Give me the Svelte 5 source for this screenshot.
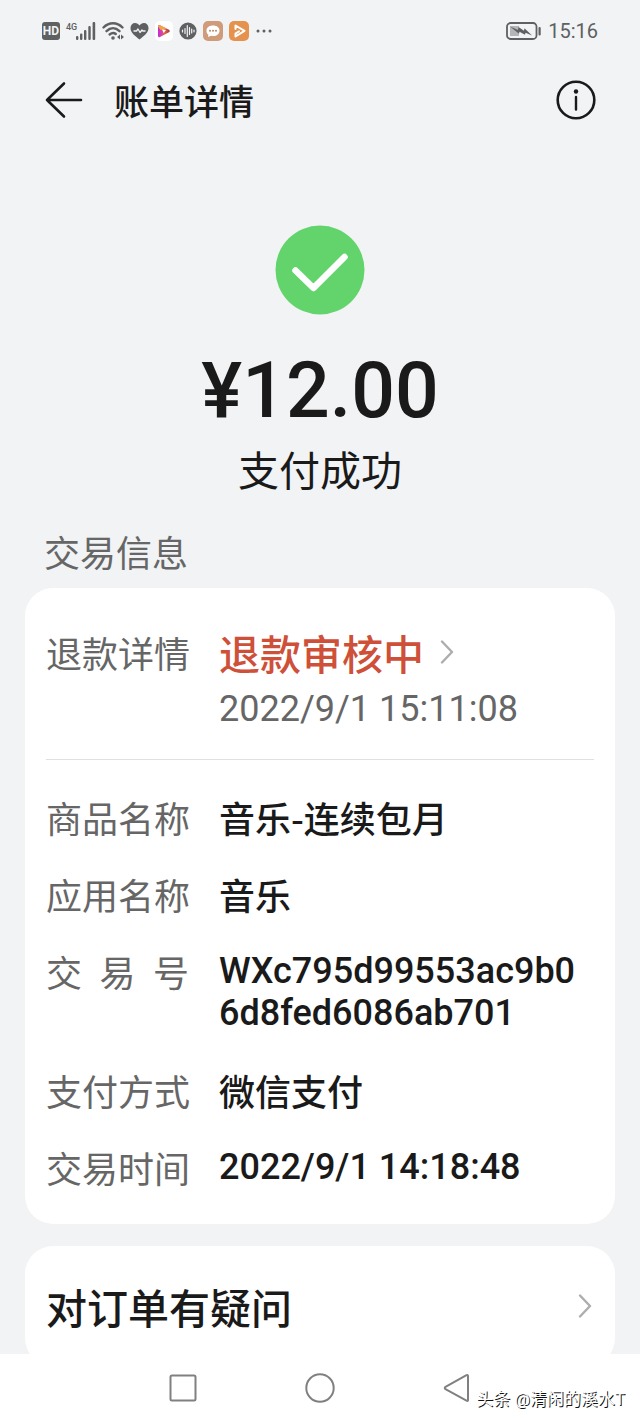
<script>
  const refund = {
    status: '退款审核中',
    time: '2022/9/1 15:11:08'
  };

  const details = [
    { label: '商品名称', value: '音乐-连续包月', cjk: true },
    { label: '应用名称', value: '音乐', cjk: true },
    { label: '交易号', value: 'WXc795d99553ac9b06d8fed6086ab701', spread: true },
    { label: '支付方式', value: '微信支付', cjk: true },
    { label: '交易时间', value: '2022/9/1 14:18:48' }
  ];
</script>

{#snippet chevron()}
  <svg class="chevron" viewBox="0 0 14 24" aria-hidden="true">
    <path d="M2 1.500l10 10.500L2 22.500" fill="none" stroke="#adadad" stroke-width="2.400" stroke-linecap="round" stroke-linejoin="round" />
  </svg>
{/snippet}

<div class="screen">
  <div class="status-bar">
    <div class="status-icons">
      <span class="hd">HD</span>

      <span class="signal">
        <span class="signal-type">4G</span>
        <svg width="20" height="18" viewBox="0 0 20 18" fill="#5e6062">
          <rect x="0" y="14" width="2.400" height="4" rx="1" />
          <rect x="4" y="11.500" width="2.400" height="6.500" rx="1" />
          <rect x="8" y="8" width="2.400" height="10" rx="1" />
          <rect x="12.300" y="4" width="2.400" height="14" rx="1" />
          <rect x="16.600" y="0" width="2.600" height="18" rx="1" />
        </svg>
      </span>

      <svg width="22" height="18" viewBox="0 0 22 18" fill="none" stroke="#5e6062" stroke-linecap="round">
        <path d="M1.500 5.500C7-.2 15-.2 20.500 5.500" stroke-width="2.400" />
        <path d="M4.500 9.200C8.500 5.200 13.500 5.200 17.500 9.200" stroke-width="2.400" />
        <path d="M7.600 12.500C9.800 10.600 12.200 10.600 13.800 12" stroke-width="2.400" />
        <circle cx="11" cy="16" r="1.800" fill="#5e6062" stroke="none" />
        <path d="M18 12.500L15 15l3 2.500zM19 12.500L22 15l-3 2.500z" fill="#5e6062" stroke="none" />
      </svg>

      <svg width="19" height="18" viewBox="0 0 19 18">
        <path d="M9.500 17.500C5 14 .5 10.500.5 6 .5 3 2.500 1 5 1c2 0 3.500 1 4.500 2.600C10.500 2 12 1 14 1c2.500 0 4.500 2 4.500 5 0 4.500-4.500 8-9 11.500z" fill="#5e6062" />
        <path d="M3.500 9h3l1.500-2 2 3.500 2-2.500 1 1h2.500" fill="none" stroke="#f1f3f5" stroke-width="1.300" stroke-linejoin="round" />
      </svg>

      <svg width="18" height="20" viewBox="0 0 18 20">
        <defs>
          <linearGradient id="video-fill" x1="0" y1="0" x2="1" y2="0">
            <stop offset="0" stop-color="#c32ad8" />
            <stop offset="0.350" stop-color="#d8489c" />
            <stop offset="0.550" stop-color="#e0703e" />
            <stop offset="1" stop-color="#a52a4c" />
          </linearGradient>
        </defs>
        <rect width="18" height="20" rx="5" fill="#fff" />
        <path d="M3 5.500q0-2 2-1.200l9 4.500q1.800 1.200 0 2.500L5 16q-2 .8-2-1.200z" fill="url(#video-fill)" />
        <path d="M3 5.500q0-2 2-1.200l6.500 3.300-6 1.500z" fill="#f2a53a" />
        <path d="M7 8.300l4 .6-2.400 3z" fill="#fff" />
      </svg>

      <svg width="18" height="18" viewBox="0 0 18 18">
        <circle cx="9" cy="9" r="8.600" fill="#5e6062" />
        <path d="M3.500 8v2M6 6.500v5M8.300 3.500v11M10.500 5.500v7M12.700 7v4M15 8.200v1.600" stroke="#f1f3f5" stroke-width="1.200" stroke-linecap="round" />
      </svg>

      <svg width="20" height="20" viewBox="0 0 20 20">
        <rect width="20" height="20" rx="5" fill="#cf9c7b" />
        <path d="M10 4.500c4 0 6.500 2.200 6.500 5.200S14 15 10 15c-.7 0-1.400 0-2-.2L5 16l.4-2.200C4 12.800 3.500 11.300 3.500 9.700c0-3 2.500-5.200 6.500-5.200z" fill="#fff" />
        <g fill="#b98768">
          <circle cx="7" cy="9.800" r="1" />
          <circle cx="10" cy="9.800" r="1" />
          <circle cx="13" cy="9.800" r="1" />
        </g>
      </svg>

      <svg width="20" height="20" viewBox="0 0 20 20">
        <rect width="20" height="20" rx="5" fill="#e5924f" />
        <path d="M6.500 8V4.500l9 5.300-9 5.700v-3l3.500-2.200" fill="none" stroke="#fff" stroke-width="2" stroke-linecap="round" stroke-linejoin="round" />
      </svg>

      <svg width="18" height="4" viewBox="0 0 18 4" fill="#5e6062">
        <circle cx="3" cy="2" r="1.500" />
        <circle cx="9" cy="2" r="1.500" />
        <circle cx="15" cy="2" r="1.500" />
      </svg>
    </div>

    <div class="status-right">
      <svg width="36" height="20" viewBox="0 0 36 20">
        <rect x="1" y="2" width="29.500" height="16" rx="3.500" fill="none" stroke="#5e6062" stroke-width="1.800" />
        <rect x="4" y="5" width="9" height="10" fill="#b5b6b8" />
        <path d="M4 5.500l8 3.500.5-3 5.500 3.800.5-2.600 7.500 7.300-6.500-2.700-.5 2-5.500-3-.5 2z" fill="#5e6062" />
        <rect x="32.500" y="6" width="2.200" height="8.500" rx="1" fill="#5e6062" />
      </svg>
      <time>15:16</time>
    </div>
  </div>

  <header class="header">
    <button class="icon-button" aria-label="返回">
      <svg width="40" height="40" viewBox="0 0 40 40" fill="none" stroke="#1a1a1a" stroke-width="2.600" stroke-linecap="round" stroke-linejoin="round">
        <path d="M20 3.500L3 20l17 16.500M3 20h34" />
      </svg>
    </button>
    <h1>账单详情</h1>
    <button class="icon-button" aria-label="帮助">
      <svg width="40" height="40" viewBox="0 0 40 40">
        <circle cx="20" cy="20" r="18.300" fill="none" stroke="#1a1a1a" stroke-width="2.600" />
        <circle cx="20" cy="11.500" r="2.200" fill="#1a1a1a" />
        <path d="M20 17v12.500" stroke="#1a1a1a" stroke-width="2.400" stroke-linecap="round" />
      </svg>
    </button>
  </header>

  <main>
    <section class="result">
      <svg width="90" height="90" viewBox="0 0 90 90">
        <circle cx="45" cy="45" r="44.500" fill="#62d46b" />
        <path d="M20.500 45.500L38.500 63 69.500 32" fill="none" stroke="#fff" stroke-width="6.500" stroke-linecap="round" stroke-linejoin="round" />
      </svg>
      <p class="amount">¥12.00</p>
      <p class="result-text">支付成功</p>
    </section>

    <h2>交易信息</h2>

    <section class="card">
      <div class="refund">
        <span class="label refund-label">退款详情</span>
        <div>
          <button class="refund-status">
            {refund.status}
            {@render chevron()}
          </button>
          <p class="refund-time">{refund.time}</p>
        </div>
      </div>

      <dl class="details">
        {#each details as item}
          <div class="row">
            <dt class="label" class:spread={item.spread}>
              {#if item.spread}
                {#each item.label as char}<span>{char}</span>{/each}
              {:else}
                {item.label}
              {/if}
            </dt>
            <dd class:cjk={item.cjk}>{item.value}</dd>
          </div>
        {/each}
      </dl>
    </section>

    <button class="card question">
      对订单有疑问
      {@render chevron()}
    </button>
  </main>

  <nav class="nav-bar">
    <button aria-label="最近任务">
      <svg width="30" height="30" viewBox="0 0 30 30">
        <rect x="2.500" y="2.500" width="25" height="25" rx="1.500" fill="none" stroke="#808080" stroke-width="2" />
      </svg>
    </button>
    <button aria-label="主屏幕">
      <svg width="30" height="30" viewBox="0 0 30 30">
        <circle cx="15" cy="15" r="13.700" fill="none" stroke="#808080" stroke-width="2" />
      </svg>
    </button>
    <button aria-label="返回">
      <svg width="30" height="30" viewBox="0 0 30 30">
        <path d="M26 3v24q0 1.500-1.500.7L3.500 16.200q-1.500-1.200 0-2.400L24.500 2.200Q26 1.500 26 3z" fill="none" stroke="#808080" stroke-width="2" stroke-linejoin="round" />
      </svg>
    </button>
    <span class="watermark">头条 @清闲的溪水T</span>
  </nav>
</div>

<style>
  :global(body) {
    background: #f1f3f5;
  }

  .screen {
    font-family: Roboto, "Noto Sans CJK SC", sans-serif;
    color: #1a1a1a;
    padding-bottom: 54px;
  }

  /* Chinese-only text takes its baseline from the CJK font */
  h1,
  h2,
  .result-text,
  .label,
  .refund-status,
  .cjk {
    font-family: "Noto Sans CJK SC", sans-serif;
  }

  h1,
  h2,
  p,
  dl,
  dd {
    margin: 0;
  }

  button {
    border: none;
    background: none;
    padding: 0;
    font-family: inherit;
    color: inherit;
    cursor: pointer;
  }

  svg {
    display: block;
    flex-shrink: 0;
  }

  .status-bar {
    display: flex;
    justify-content: space-between;
    align-items: center;
    height: 62px;
    padding: 0 42px;
    color: #5e6062;
  }

  .status-icons {
    display: flex;
    align-items: center;
    gap: 6px;
  }

  .hd {
    width: 18px;
    border-radius: 3px;
    background: #5e6062;
    color: #f1f3f5;
    font-size: 12px;
    font-weight: 700;
    line-height: 18px;
    text-align: center;
  }

  .signal {
    display: flex;
    align-items: flex-start;
  }

  .signal-type {
    width: 10px;
    font-size: 9px;
    line-height: 10px;
    font-weight: 500;
  }

  .status-right {
    display: flex;
    align-items: center;
    gap: 6px;
    font-size: 20px;
  }

  .header {
    display: flex;
    align-items: center;
    height: 76px;
    padding: 0 44px;
  }

  .header h1 {
    flex: 1;
    padding-left: 30px;
    font-size: 35px;
    font-weight: 500;
    line-height: 42px;
  }

  .result {
    display: flex;
    flex-direction: column;
    align-items: center;
    padding-top: 87px;
  }

  .amount {
    margin-top: 34px;
    font-size: 77px;
    font-weight: 500;
    line-height: 84px;
  }

  .result-text {
    margin-top: 9px;
    font-size: 41px;
    line-height: 52px;
  }

  h2 {
    padding: 36px 44px 16px;
    color: #666;
    font-size: 36px;
    font-weight: 400;
    line-height: 42px;
  }

  .card {
    margin: 0 25px;
    padding: 0 21px;
    border-radius: 28px;
    background: #fff;
  }

  .refund {
    display: flex;
    gap: 30px;
    padding: 38px 0 29px;
    border-bottom: 1px solid #e0e0e0;
  }

  .label {
    flex: none;
    width: 143px;
    color: #666;
    font-size: 36px;
    line-height: 42px;
    white-space: nowrap;
  }

  .refund-label {
    line-height: 52px;
  }

  .refund-status {
    display: flex;
    align-items: center;
    gap: 16px;
    color: #cf5039;
    font-size: 41px;
    font-weight: 500;
    line-height: 52px;
  }

  .refund-time {
    margin-top: 10px;
    color: #666;
    font-size: 36px;
    line-height: 42px;
  }

  .chevron {
    width: 14px;
    height: 24px;
  }

  .details {
    display: flex;
    flex-direction: column;
    gap: 35px;
    padding: 36px 0;
  }

  .row {
    display: flex;
    gap: 30px;
  }

  .spread {
    display: flex;
    justify-content: space-between;
  }

  dd {
    flex: 1;
    min-width: 0;
    font-size: 36px;
    font-weight: 500;
    line-height: 42px;
    overflow-wrap: anywhere;
  }

  .question {
    display: flex;
    justify-content: space-between;
    align-items: center;
    width: calc(100% - 50px);
    height: 120px;
    margin-top: 22px;
    padding-right: 23px;
    font-size: 41px;
    font-weight: 500;
  }

  .nav-bar {
    position: fixed;
    left: 0;
    right: 0;
    bottom: 0;
    display: flex;
    justify-content: center;
    align-items: center;
    gap: 107px;
    height: 68px;
    background: #fff;
  }

  .watermark {
    position: absolute;
    right: 15px;
    bottom: 13px;
    color: #fff;
    font-size: 17px;
    line-height: 20px;
    text-shadow: 1px 1px 0 #111;
  }
</style>
